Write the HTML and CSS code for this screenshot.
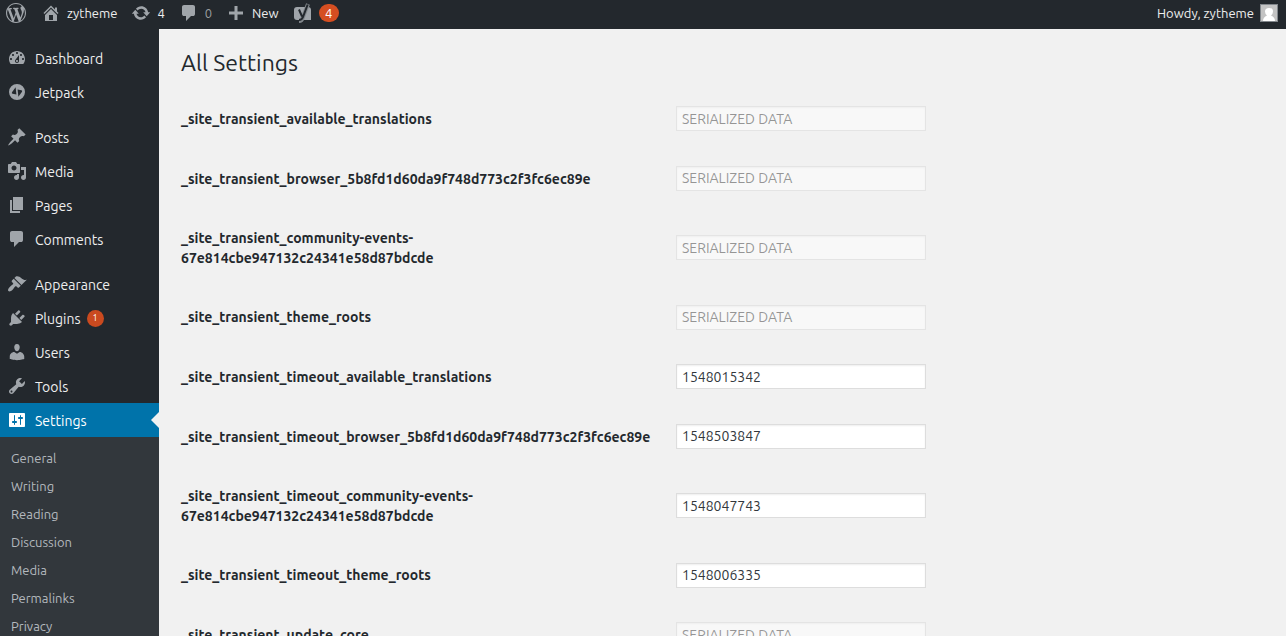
FILE: index.html
```html
<!DOCTYPE html>
<html lang="en">

<head>
    <meta charset="UTF-8">
    <meta name="viewport" content="width=device-width, initial-scale=1.0">
    <title>All Settings</title>
    <link rel="stylesheet" href="styles.css">
</head>

<body>
    <header class="adminbar">
        <a class="bar-item bar-logo" href="#" aria-label="About WordPress">
            <svg class="icon" viewBox="0 0 20 20"><path d="M20 10c0-5.51-4.49-10-10-10C4.48 0 0 4.49 0 10c0 5.52 4.48 10 10 10 5.51 0 10-4.48 10-10zM7.78 15.37L4.37 6.22c.55-.02 1.17-.08 1.17-.08.5-.06.44-1.13-.06-1.11 0 0-1.45.11-2.37.11-.18 0-.37 0-.58-.01C4.12 2.69 6.87 1.11 10 1.11c2.33 0 4.45.87 6.05 2.34-.68-.11-1.65.39-1.65 1.58 0 .74.45 1.36.9 2.1.35.61.55 1.36.55 2.46 0 1.49-1.4 5-1.4 5l-3.03-8.37c.54-.02.82-.17.82-.17.5-.05.44-1.25-.06-1.22 0 0-1.44.12-2.38.12-.87 0-2.33-.12-2.33-.12-.5-.03-.56 1.2-.06 1.22l.92.08 1.26 3.41zM17.41 10c.24-.64.74-1.87.43-4.25.7 1.29 1.05 2.71 1.05 4.25 0 3.29-1.73 6.24-4.4 7.78.97-2.59 1.94-5.2 2.92-7.78zM6.1 18.09C3.12 16.65 1.11 13.53 1.11 10c0-1.3.23-2.48.72-3.59C3.25 10.3 4.67 14.2 6.1 18.09zm4.03-6.63l2.58 6.98c-.86.29-1.76.45-2.71.45-.79 0-1.57-.11-2.29-.33.81-2.38 1.62-4.74 2.42-7.1z"/></svg>
        </a>
        <a class="bar-item" href="#">
            <svg class="icon" viewBox="0 0 20 20"><path d="M16 8.5l1.53 1.53-1.06 1.06L10 4.6l-6.47 6.49-1.06-1.06L10 2.5l4 4v-2h2v4zm-6-2.46l6 5.99V18H4v-5.97zM12 17v-5H8v5h4z"/></svg>
            <span>zytheme</span>
        </a>
        <a class="bar-item" href="#">
            <svg class="icon" viewBox="0 0 20 20"><path d="M10.2 3.28c3.53 0 6.43 2.61 6.92 6h2.08l-3.5 4-3.5-4h2.32c-.45-1.97-2.21-3.45-4.32-3.45-1.45 0-2.73.71-3.54 1.78L4.95 5.66C6.23 4.2 8.11 3.28 10.2 3.28zm-.4 13.44c-3.52 0-6.43-2.61-6.92-6H.8l3.5-4c1.17 1.33 2.33 2.67 3.5 4H5.48c.45 1.97 2.21 3.45 4.32 3.45 1.45 0 2.73-.71 3.54-1.78l1.71 1.95c-1.28 1.46-3.15 2.38-5.25 2.38z"/></svg>
            <span>4</span>
        </a>
        <a class="bar-item" href="#">
            <svg class="icon" viewBox="0 0 20 20"><path d="M5 2h9q.82 0 1.41.59T16 4v7q0 .82-.59 1.41T14 13h-2l-5 5v-5H5q-.82 0-1.41-.59T3 11V4q0-.82.59-1.41T5 2z"/></svg>
            <span class="count-zero">0</span>
        </a>
        <a class="bar-item" href="#">
            <svg class="icon" viewBox="0 0 20 20"><path d="M17 8.5v3h-5.5V17h-3v-5.5H3v-3h5.5V3h3v5.5z"/></svg>
            <span>New</span>
        </a>
        <a class="bar-item" href="#" aria-label="SEO">
            <svg class="icon" viewBox="0 0 20 20"><path d="M4 4h11a3 3 0 0 1 3 3v10H4a3 3 0 0 1-3-3V7a3 3 0 0 1 3-3z"/><path class="icon-edge" d="M15 1l-5 13q-1 4-4 4"/><path class="icon-line" d="M6 6.5l3 7M14.7 1.5L10 14q-1 3-4 3"/></svg>
            <span class="bar-badge">4</span>
        </a>
        <a class="bar-item bar-user" href="#">
            <span>Howdy, zytheme</span>
            <svg class="avatar" viewBox="0 0 18 18"><rect class="avatar-frame" width="18" height="18"/><rect class="avatar-bg" x="1" y="1" width="16" height="16"/><path class="avatar-body" d="M3 17q0-4 4-5.5Q5 10 5 7.5 5 4 9 4t4 3.5q0 2.5-2 4 4 1.5 4 5.5z"/></svg>
        </a>
    </header>

    <div class="layout">
        <nav class="menu">
            <ul class="menu-group">
                <li><a class="menu-link" href="#"><svg class="icon" viewBox="0 0 20 20"><path d="M3.76 16h12.48c1.1-1.37 1.76-3.11 1.76-5 0-4.42-3.58-8-8-8s-8 3.58-8 8c0 1.89.66 3.63 1.76 5zM10 4c.55 0 1 .45 1 1s-.45 1-1 1-1-.45-1-1 .45-1 1-1zM6 6c.55 0 1 .45 1 1s-.45 1-1 1-1-.45-1-1 .45-1 1-1zm8 0c.55 0 1 .45 1 1s-.45 1-1 1-1-.45-1-1 .45-1 1-1zm-5.37 5.55L12 7v6c0 1.1-.9 2-2 2s-2-.9-2-2c0-.57.24-1.08.63-1.45zM4 10c.55 0 1 .45 1 1s-.45 1-1 1-1-.45-1-1 .45-1 1-1zm12 0c.55 0 1 .45 1 1s-.45 1-1 1-1-.45-1-1 .45-1 1-1zm-5 3c0-.55-.45-1-1-1s-1 .45-1 1 .45 1 1 1 1-.45 1-1z"/></svg>Dashboard</a></li>
                <li><a class="menu-link" href="#"><svg class="icon" viewBox="0 0 20 20"><path fill-rule="evenodd" d="M10 2a8 8 0 1 0 0 16 8 8 0 0 0 0-16zM8.6 5.2l.8 7.4-3.8-.9q-1.2-.4-.6-1.5zM11.4 14.8l-.8-7.4 3.8.9q1.2.4.6 1.5z"/></svg>Jetpack</a></li>
            </ul>
            <ul class="menu-group">
                <li><a class="menu-link" href="#"><svg class="icon" viewBox="0 0 20 20"><path d="M10.44 3.02l1.82-1.82 6.36 6.35-1.83 1.82c-1.05-.68-2.48-.57-3.41.36l-.75.75c-.92.93-1.04 2.35-.35 3.41l-1.83 1.82-2.41-2.41-2.8 2.79c-.42.42-3.38 2.71-3.8 2.29s1.86-3.39 2.28-3.81l2.79-2.79L4.1 9.36l1.83-1.82c1.05.69 2.48.57 3.4-.36l.75-.75c.93-.92 1.05-2.35.36-3.41z"/></svg>Posts</a></li>
                <li><a class="menu-link" href="#"><svg class="icon" viewBox="0 0 20 20"><path d="M13 11V4c0-.55-.45-1-1-1h-1.67L9 1H5L3.67 3H2c-.55 0-1 .45-1 1v7c0 .55.45 1 1 1h10c.55 0 1-.45 1-1zM7 4.5c1.38 0 2.5 1.12 2.5 2.5S8.38 9.5 7 9.5 4.5 8.38 4.5 7 5.62 4.5 7 4.5zM14 6h5v10.5c0 1.38-1.12 2.5-2.5 2.5S14 17.88 14 16.5s1.12-2.5 2.5-2.5c.17 0 .34.02.5.05V9h-3V6zm-4 8.05V13h2v3.5c0 1.38-1.12 2.5-2.5 2.5S7 17.88 7 16.5 8.12 14 9.5 14c.17 0 .34.02.5.05z"/></svg>Media</a></li>
                <li><a class="menu-link" href="#"><svg class="icon" viewBox="0 0 20 20"><path d="M6 15V2h10v13H6zm-1 1h8v2H3V5h2v11z"/></svg>Pages</a></li>
                <li><a class="menu-link" href="#"><svg class="icon" viewBox="0 0 20 20"><path d="M5 2h9q.82 0 1.41.59T16 4v7q0 .82-.59 1.41T14 13h-2l-5 5v-5H5q-.82 0-1.41-.59T3 11V4q0-.82.59-1.41T5 2z"/></svg>Comments</a></li>
            </ul>
            <ul class="menu-group">
                <li><a class="menu-link" href="#"><svg class="icon" viewBox="0 0 20 20"><path d="M14.48 11.06L7.41 3.99l1.5-1.5c.5-.56 2.3-.47 3.51.32 1.21.8 1.43 1.28 2.91 2.1 1.18.64 2.45 1.26 4.45.85zm-.71.71L6.7 4.7 4.93 6.47c-.39.39-.39 1.02 0 1.41l1.06 1.06c.39.39.39 1.03 0 1.42-.6.6-1.43 1.11-2.21 1.69-.35.26-.7.53-1.01.84C1.43 14.23.4 16.08 1.4 17.07c.99 1 2.84-.03 4.18-1.36.31-.31.58-.66.85-1.02.57-.78 1.08-1.61 1.69-2.21.39-.39 1.02-.39 1.41 0l1.06 1.06c.39.39 1.02.39 1.41 0z"/></svg>Appearance</a></li>
                <li><a class="menu-link" href="#"><svg class="icon" viewBox="0 0 20 20"><path d="M13.11 4.36L9.87 7.6 8 5.73l3.24-3.24c.35-.34 1.05-.2 1.56.32.52.51.66 1.21.31 1.55zm-8 1.77l.91-1.12 9.01 9.01-1.19.84c-.71.71-2.63 1.16-3.82 1.16H6.14L4.9 17.26c-.59.59-1.54.59-2.12 0-.59-.58-.59-1.53 0-2.12l1.24-1.24v-3.88c0-1.13.4-3.19 1.09-3.89zm7.26 3.97l3.24-3.24c.34-.35 1.04-.21 1.55.31.52.51.66 1.21.31 1.55l-3.24 3.25z"/></svg>Plugins <span class="menu-badge">1</span></a></li>
                <li><a class="menu-link" href="#"><svg class="icon" viewBox="0 0 20 20"><path d="M10 9.25c-2.27 0-2.73-3.44-2.73-3.44C7 4.02 7.82 2 9.97 2c2.16 0 2.98 2.02 2.71 3.81 0 0-.41 3.44-2.68 3.44zm0 2.57L12.72 10c2.39 0 4.52 2.33 4.52 4.53v2.49s-3.65 1.13-7.24 1.13c-3.65 0-7.24-1.13-7.24-1.13v-2.49c0-2.25 1.94-4.48 4.47-4.48z"/></svg>Users</a></li>
                <li><a class="menu-link" href="#"><svg class="icon" viewBox="0 0 20 20"><path d="M16.68 9.77c-1.34 1.34-3.3 1.67-4.95.99l-5.41 6.52c-.99.99-2.59.99-3.58 0s-.99-2.59 0-3.57l6.52-5.42c-.68-1.65-.35-3.61.99-4.95 1.28-1.28 3.12-1.62 4.72-1.06l-2.89 2.89 2.82 2.82 2.86-2.87c.53 1.58.18 3.39-1.08 4.65zM3.81 16.21c.4.39 1.04.39 1.43 0 .4-.4.4-1.04 0-1.43-.39-.4-1.03-.4-1.43 0-.39.39-.39 1.03 0 1.43z"/></svg>Tools</a></li>
                <li><a class="menu-link current" href="#"><svg class="icon" viewBox="0 0 20 20"><path d="M18 16V4c0-.55-.45-1-1-1H3c-.55 0-1 .45-1 1v12c0 .55.45 1 1 1h14c.55 0 1-.45 1-1zM8 11h1c.55 0 1 .45 1 1s-.45 1-1 1H8v1.5c0 .28-.22.5-.5.5s-.5-.22-.5-.5V13H6c-.55 0-1-.45-1-1s.45-1 1-1h1V5.5c0-.28.22-.5.5-.5s.5.22.5.5V11zm5-2h-1c-.55 0-1-.45-1-1s.45-1 1-1h1V5.5c0-.28.22-.5.5-.5s.5.22.5.5V7h1c.55 0 1 .45 1 1s-.45 1-1 1h-1v5.5c0 .28-.22.5-.5.5s-.5-.22-.5-.5V9z"/></svg>Settings</a></li>
            </ul>
            <ul class="submenu">
                <li><a href="#">General</a></li>
                <li><a href="#">Writing</a></li>
                <li><a href="#">Reading</a></li>
                <li><a href="#">Discussion</a></li>
                <li><a href="#">Media</a></li>
                <li><a href="#">Permalinks</a></li>
                <li><a href="#">Privacy</a></li>
            </ul>
        </nav>

        <main class="content">
            <h1>All Settings</h1>
            <form>
                <table class="form-table">
                    <tr>
                        <th scope="row"><label for="available_translations">_site_transient_available_translations</label></th>
                        <td><input type="text" id="available_translations" value="SERIALIZED DATA" disabled></td>
                    </tr>
                    <tr>
                        <th scope="row"><label for="browser">_site_transient_browser_5b8fd1d60da9f748d773c2f3fc6ec89e</label></th>
                        <td><input type="text" id="browser" value="SERIALIZED DATA" disabled></td>
                    </tr>
                    <tr>
                        <th scope="row"><label for="community">_site_transient_community-events-<br>67e814cbe947132c24341e58d87bdcde</label></th>
                        <td><input type="text" id="community" value="SERIALIZED DATA" disabled></td>
                    </tr>
                    <tr>
                        <th scope="row"><label for="theme_roots">_site_transient_theme_roots</label></th>
                        <td><input type="text" id="theme_roots" value="SERIALIZED DATA" disabled></td>
                    </tr>
                    <tr>
                        <th scope="row"><label for="timeout_translations">_site_transient_timeout_available_translations</label></th>
                        <td><input type="text" id="timeout_translations" value="1548015342"></td>
                    </tr>
                    <tr>
                        <th scope="row"><label for="timeout_browser">_site_transient_timeout_browser_5b8fd1d60da9f748d773c2f3fc6ec89e</label></th>
                        <td><input type="text" id="timeout_browser" value="1548503847"></td>
                    </tr>
                    <tr>
                        <th scope="row"><label for="timeout_community">_site_transient_timeout_community-events-<br>67e814cbe947132c24341e58d87bdcde</label></th>
                        <td><input type="text" id="timeout_community" value="1548047743"></td>
                    </tr>
                    <tr>
                        <th scope="row"><label for="timeout_roots">_site_transient_timeout_theme_roots</label></th>
                        <td><input type="text" id="timeout_roots" value="1548006335"></td>
                    </tr>
                    <tr>
                        <th scope="row"><label for="update_core">_site_transient_update_core</label></th>
                        <td><input type="text" id="update_core" value="SERIALIZED DATA" disabled></td>
                    </tr>
                </table>
            </form>
        </main>
    </div>
</body>

</html>
```
FILE: styles.css
```css
* {
    box-sizing: border-box;
}

body {
    display: flex;
    flex-direction: column;
    height: 100vh;
    margin: 0;
    overflow: hidden;
    background: #f1f1f1;
    color: #23282d;
    font-family: Ubuntu, "Open Sans", sans-serif;
    font-size: 14px;
    line-height: 1.4;
}

a {
    text-decoration: none;
}

.icon {
    flex: none;
    width: 20px;
    height: 20px;
    fill: #a0a5aa;
}

/* Top bar */
.adminbar {
    display: flex;
    flex: none;
    height: 29px;
    padding: 0 8px 3px 6px;
    gap: 15px;
    background: #23282d;
    font-size: 13px;
}

.bar-item {
    display: flex;
    align-items: center;
    gap: 6px;
    color: #eee;
}

.bar-item + .bar-item:not(.bar-user) {
    margin-right: -1px;
}

.count-zero {
    color: #9a9da0;
}

.icon-edge {
    fill: none;
    stroke: #82878c;
    stroke-width: 4;
}

.icon-line {
    fill: none;
    stroke: #23282d;
    stroke-width: 2;
}

.bar-badge {
    min-width: 20px;
    border-radius: 10px;
    background: #d54e21;
    color: #fff;
    line-height: 18px;
    text-align: center;
}

.bar-item.bar-user {
    margin-left: auto;
}

.avatar {
    width: 18px;
    height: 18px;
}

.avatar-frame {
    fill: #82878c;
}

.avatar-bg {
    fill: #c3c3c3;
}

.avatar-body {
    fill: #fff;
}

.layout {
    display: flex;
    flex: 1;
    min-height: 0;
}

/* Side menu */
.menu {
    display: flex;
    flex: none;
    flex-direction: column;
    width: 159px;
    padding-top: 12px;
    background: #23282d;
}

.menu ul {
    margin: 0;
    padding: 0;
    list-style: none;
}

.menu .menu-group {
    margin-bottom: 11px;
}

.menu .menu-group:nth-of-type(3) {
    margin-bottom: 0;
}

.menu-link {
    position: relative;
    display: flex;
    align-items: flex-start;
    height: 34px;
    padding: 9px 0 0 7px;
    gap: 8px;
    color: #eee;
}

.menu-link .icon {
    margin-top: -2px;
}

.menu-badge {
    width: 17px;
    margin-left: -2px;
    border-radius: 9px;
    background: #ca4a1f;
    color: #fff;
    font-size: 9px;
    line-height: 17px;
    text-align: center;
}

.menu-link.current {
    background: #0073aa;
    color: #fff;
}

.menu-link.current .icon {
    fill: #fff;
}

.menu-link.current::after {
    content: "";
    position: absolute;
    top: 9px;
    right: 0;
    border: 8px solid transparent;
    border-right-color: #f1f1f1;
}

.menu .submenu {
    flex: 1;
    padding: 7px 0;
    background: #32373c;
}

.submenu a {
    display: block;
    padding: 0 11px;
    color: #b4b9be;
    font-size: 13px;
    line-height: 28px;
}

/* Settings form */
.content {
    flex: 1;
    padding: 19px 20px 0 22px;
}

.content h1 {
    margin: 0;
    font-size: 23px;
    font-weight: 400;
    line-height: 29px;
}

.form-table {
    width: 100%;
    margin-top: 12px;
    border-collapse: collapse;
}

.form-table th {
    width: 484px;
    padding: 21px 10px 19px 0;
    font-weight: 600;
    text-align: left;
    white-space: nowrap;
}

.form-table td {
    padding: 15px 10px;
}

.form-table input {
    display: block;
    width: 250px;
    height: 25px;
    margin: 1px;
    padding: 3px 5px;
    border: 1px solid #ddd;
    background: #fff;
    box-shadow: inset 0 1px 2px rgba(0, 0, 0, .07);
    color: #32373c;
    font: inherit;
}

.form-table input:disabled {
    border-color: rgba(222, 222, 222, .75);
    background: rgba(255, 255, 255, .5);
    box-shadow: inset 0 1px 2px rgba(0, 0, 0, .04);
    color: rgba(51, 51, 51, .5);
}
```
